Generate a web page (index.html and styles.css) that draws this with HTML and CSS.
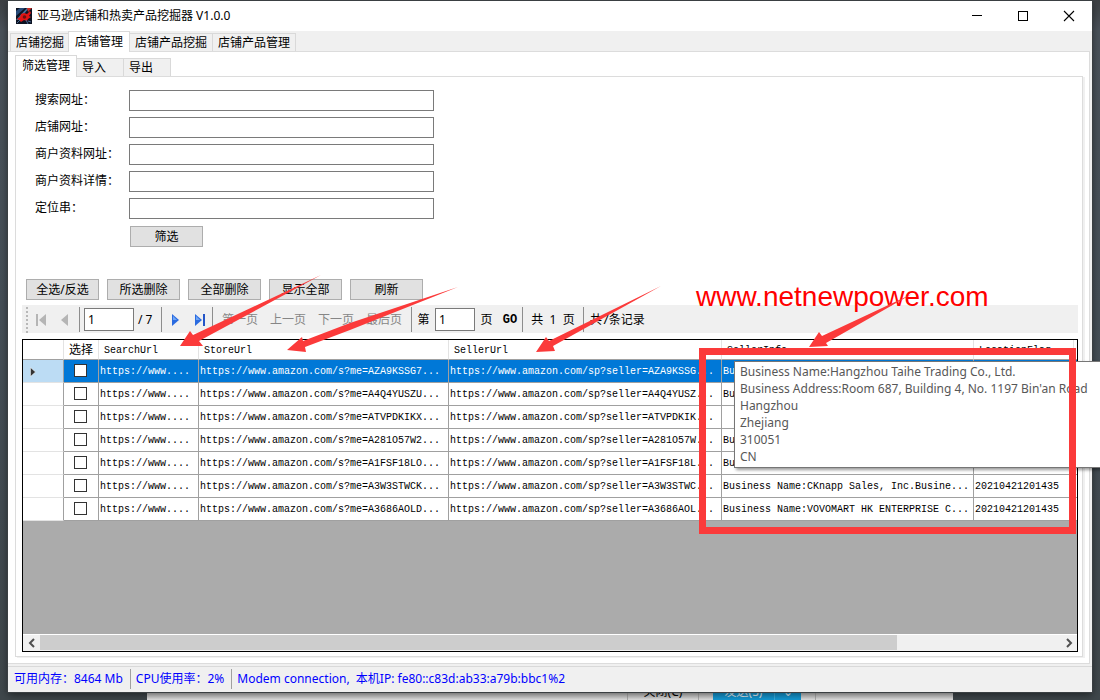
FILE: index.html
```html
<!DOCTYPE html>
<html lang="zh-CN">
<head>
<meta charset="utf-8">
<title>亚马逊店铺和热卖产品挖掘器 V1.0.0</title>
<link rel="stylesheet" href="styles.css">
</head>
<body>
<div class="behind">
  <div class="behind-cell behind-close">关闭(C)</div>
  <div class="behind-send"><span class="behind-label">发送(S)</span><span class="behind-more">⌄</span></div>
  <div class="behind-cell behind-end"></div>
</div>

<main class="window">
  <header class="titlebar">
    <svg class="app-icon" viewBox="0 0 16 16" width="16" height="16">
      <rect width="16" height="16" fill="#0c1322"/>
      <path d="M0 3L4 0H9L0 8Z" fill="#274a78"/>
      <path d="M0 12L11 0L13 0L3 12Z" fill="#45709c"/>
      <path d="M11 0H16L12 4Z" fill="#cf2a22"/>
      <path d="M5 6L8 5L11 6L14 3L15 5L13 8L15 9L12 11L11 13L8 12L5 14L3 12L1 11L4 9Z" fill="#e01414"/>
      <circle cx="8.500" cy="9" r="1.800" fill="#6d1010"/>
      <path d="M1 15L4 12M12 13L15 14M10 12L12 16" stroke="#4a6a94" fill="none"/>
    </svg>
    <h1 class="title">亚马逊店铺和热卖产品挖掘器 V1.0.0</h1>
    <button class="win-btn" aria-label="最小化"><svg width="12" height="12" viewBox="0 0 12 12"><path d="M1 5.500H11" stroke="#000"/></svg></button>
    <button class="win-btn" aria-label="最大化"><svg width="12" height="12" viewBox="0 0 12 12"><rect x="1.500" y="1.500" width="9" height="9" fill="none" stroke="#000"/></svg></button>
    <button class="win-btn" aria-label="关闭"><svg width="12" height="12" viewBox="0 0 12 12"><path d="M1 1L11 11M11 1L1 11" stroke="#000" stroke-width="1.100"/></svg></button>
  </header>

  <nav class="tabs main-tabs">
    <button class="tab">店铺挖掘</button>
    <button class="tab active">店铺管理</button>
    <button class="tab">店铺产品挖掘</button>
    <button class="tab">店铺产品管理</button>
  </nav>
  <section class="panel main-panel">
    <nav class="tabs sub-tabs">
      <button class="tab active">筛选管理</button>
      <button class="tab short">导入</button>
      <button class="tab short">导出</button>
    </nav>
    <section class="panel sub-panel">
      <form class="filter">
        <label for="f1">搜索网址：</label><input id="f1" type="text">
        <label for="f2">店铺网址：</label><input id="f2" type="text">
        <label for="f3">商户资料网址：</label><input id="f3" type="text">
        <label for="f4">商户资料详情：</label><input id="f4" type="text">
        <label for="f5">定位串：</label><input id="f5" type="text">
        <button class="btn filter-btn" type="button">筛选</button>
      </form>
      <div class="actions">
        <button class="btn">全选/反选</button>
        <button class="btn">所选删除</button>
        <button class="btn">全部删除</button>
        <button class="btn">显示全部</button>
        <button class="btn">刷新</button>
      </div>

      <div class="toolbar">
        <span class="grip"></span>
        <button class="nav" aria-label="首页"><svg width="12" height="12" viewBox="0 0 12 12"><path d="M1 0H3V12H1Z" fill="#b5b5b5"/><path d="M11 0V12L4 6Z" fill="#b5b5b5"/></svg></button>
        <button class="nav" aria-label="前页"><svg width="12" height="12" viewBox="0 0 12 12"><path d="M11 0V12L4 6Z" fill="#b5b5b5"/></svg></button>
        <span class="sep"></span>
        <input class="page-box" type="text" value="1" aria-label="当前页">
        <span class="total">/ 7</span>
        <span class="sep"></span>
        <button class="nav wide" aria-label="后页"><svg width="12" height="12" viewBox="0 0 12 12"><path d="M3 0V12L10 6Z" fill="#2a6be0"/><path d="M4 2V6H8Z" fill="#6ea5f5"/></svg></button>
        <button class="nav wide" aria-label="末页"><svg width="12" height="12" viewBox="0 0 12 12"><path d="M1 0V12L8 6Z" fill="#2a6be0"/><path d="M2 2V6H6Z" fill="#6ea5f5"/><path d="M9 0H11V12H9Z" fill="#2455c8"/></svg></button>
        <span class="sep"></span>
        <span class="links">
          <button class="link" disabled>第一页</button>
          <button class="link" disabled>上一页</button>
          <button class="link" disabled>下一页</button>
          <button class="link" disabled>最后页</button>
        </span>
        <span class="sep"></span>
        <label class="tight" for="go">第</label>
        <input class="page-box small" id="go" type="text" value="1">
        <span class="tight">页</span>
        <button class="go">GO</button>
        <span class="sep"></span>
        <span class="pages">共&nbsp; 1&nbsp; 页</span>
        <span class="sep"></span>
        <span class="records">共7条记录</span>
      </div>

      <div class="grid">
        <div class="grid-view">
        <table>
          <colgroup><col class="c-row"><col class="c-check"><col class="c-search"><col class="c-store"><col class="c-seller"><col class="c-info"><col class="c-flag"><col class="c-rest"></colgroup>
          <thead>
            <tr><th></th><th class="pick">选择</th><th>SearchUrl</th><th>StoreUrl</th><th>SellerUrl</th><th>SellerInfo</th><th>LocationFlag</th><th></th></tr>
          </thead>
          <tbody>
            <tr class="selected"><td><svg class="marker" width="6" height="10" viewBox="0 0 6 10"><path d="M0.500 0.500V9.500L5.500 5Z" fill="#333" stroke="#fff" stroke-width=".5"/></svg></td><td><input type="checkbox" aria-label="选择"></td><td>https://www....</td><td>https://www.amazon.com/s?me=AZA9KSSG7...</td><td>https://www.amazon.com/sp?seller=AZA9KSSG...</td><td>Bu</td><td></td><td></td></tr>
            <tr><td></td><td><input type="checkbox" aria-label="选择"></td><td>https://www....</td><td>https://www.amazon.com/s?me=A4Q4YUSZU...</td><td>https://www.amazon.com/sp?seller=A4Q4YUSZ...</td><td>Bu</td><td></td><td></td></tr>
            <tr><td></td><td><input type="checkbox" aria-label="选择"></td><td>https://www....</td><td>https://www.amazon.com/s?me=ATVPDKIKX...</td><td>https://www.amazon.com/sp?seller=ATVPDKIK...</td><td></td><td></td><td></td></tr>
            <tr><td></td><td><input type="checkbox" aria-label="选择"></td><td>https://www....</td><td>https://www.amazon.com/s?me=A281O57W2...</td><td>https://www.amazon.com/sp?seller=A281O57W...</td><td>Bu</td><td></td><td></td></tr>
            <tr><td></td><td><input type="checkbox" aria-label="选择"></td><td>https://www....</td><td>https://www.amazon.com/s?me=A1FSF18LO...</td><td>https://www.amazon.com/sp?seller=A1FSF18L...</td><td>Bu</td><td></td><td></td></tr>
            <tr><td></td><td><input type="checkbox" aria-label="选择"></td><td>https://www....</td><td>https://www.amazon.com/s?me=A3W3STWCK...</td><td>https://www.amazon.com/sp?seller=A3W3STWC...</td><td>Business Name:CKnapp Sales, Inc.Busine...</td><td>20210421201435</td><td></td></tr>
            <tr><td></td><td><input type="checkbox" aria-label="选择"></td><td>https://www....</td><td>https://www.amazon.com/s?me=A3686AOLD...</td><td>https://www.amazon.com/sp?seller=A3686AOL...</td><td>Business Name:VOVOMART HK ENTERPRISE C...</td><td>20210421201435</td><td></td></tr>
          </tbody>
        </table>
        </div>
        <div class="scrollbar">
          <button class="scroll-btn" aria-label="向左"><svg width="8" height="10" viewBox="0 0 8 10"><path d="M6 1L2 5L6 9" fill="none" stroke="#505050" stroke-width="2"/></svg></button>
          <div class="track"><div class="thumb"></div></div>
          <button class="scroll-btn" aria-label="向右"><svg width="8" height="10" viewBox="0 0 8 10"><path d="M2 1L6 5L2 9" fill="none" stroke="#505050" stroke-width="2"/></svg></button>
        </div>
      </div>
    </section>
  </section>

  <footer class="status">
    <span>可用内存：8464 Mb</span>
    <span>CPU使用率：2%</span>
    <span>Modem connection,&nbsp; 本机IP: fe80::c83d:ab33:a79b:bbc1%2</span>
  </footer>
</main>

<div class="tooltip" role="tooltip">Business Name:Hangzhou Taihe Trading Co., Ltd.<br>Business Address:Room 687, Building 4, No. 1197 Bin'an Road<br>Hangzhou<br>Zhejiang<br>310051<br>CN</div>
<div class="frame"></div>
<div class="watermark">www.netnewpower.com</div>
<svg class="arrows" width="1100" height="400" viewBox="0 0 1100 400">
  <g fill="#fb3a3a">
    <path d="M180 346L190 331L193 335L321 275L199 341L203 346Z"/>
    <path d="M287 350L302 337L303 341L350 323L458 287L350 330L305 347L306 352Z"/>
    <path d="M536 352L546 337L549 341L661 286L553 346L555 351Z"/>
    <path d="M809 347L819 332L822 336L912 294L826 343L828 346Z"/>
  </g>
</svg>
</body>
</html>
```
FILE: styles.css
```css
* { box-sizing: border-box; }
body {
  margin: 0;
  height: 100vh;
  overflow: hidden;
  position: relative;
  background: linear-gradient(#3c4043 0, #4a525a 30px, #454f57 45%, #3f474b);
  font: 12px/16px "Noto Sans", "Noto Sans CJK SC", sans-serif;
  color: #000;
}
button, input { font: inherit; color: inherit; margin: 0; padding: 0; }
button { border: 0; background: none; }
svg { display: block; }

.behind {
  position: absolute;
  left: 147px;
  right: 147px;
  bottom: 0;
  height: 16px;
  display: flex;
  overflow: hidden;
  background: linear-gradient(#b8b8b8 7px, #e6e6e6 16px);
  padding-left: 480px;
}
.behind-cell { border: 1px solid #b0b0b0; border-width: 0 1px; }
.behind-close { width: 72px; text-align: center; }
.behind-send {
  display: flex;
  width: 88px;
  margin: 0 14px;
  background: #149bd7;
  color: #e6f4fb;
}
.behind-label { width: 62px; text-align: center; border-right: 1px solid #3bb0e2; }
.behind-more { flex: 1; text-align: center; }
.behind-end { border-right: 0; flex: 1; }

.window {
  position: relative;
  height: calc(100vh - 9px);
  margin: 1px 8px 8px;
  display: flex;
  flex-direction: column;
  background: #f0f0f0;
  box-shadow: 0 0 0 1px #3a3f42, 0 3px 8px rgba(0, 0, 0, .5);
}
.titlebar { display: flex; align-items: center; height: 30px; padding-left: 8px; background: #fff; }
.title { flex: 1; margin: 0 0 0 5px; font-size: 12px; font-weight: 400; }
.win-btn { width: 46px; height: 30px; display: flex; align-items: center; justify-content: center; }

.tabs { display: flex; align-items: flex-end; position: relative; }
.main-tabs { height: 20px; padding-left: 2px; }
.sub-tabs { height: 21px; margin-left: 7px; }
.tab {
  height: 18px;
  padding: 0 5px;
  border: 1px solid #d9d9d9;
  border-left-width: 0;
  border-bottom: 0;
  background: #f0f0f0;
  text-align: left;
}
.tab:first-child { border-left-width: 1px; padding-right: 4px; }
.tab.active {
  height: 21px;
  padding: 0 6px 1px;
  margin: 0 0 -1px -1px;
  border-left-width: 1px;
  background: #fff;
}
.tab.short { width: 47px; }
.sub-tabs .tab.active { margin-left: 0; height: 22px; }

.panel { display: flex; flex-direction: column; flex: 1; min-height: 0; background: #fff; border: 1px solid #dcdcdc; }
.main-panel { margin: 0 2px 1px 0; padding: 3px 6px 6px 0; border-left: 0; }
.sub-panel { margin-left: 7px; padding: 12px 4px 4px 6px; box-shadow: 2px 1px 0 #f0f0f0; }

.filter {
  display: grid;
  grid-template-columns: 94px 305px;
  grid-auto-rows: 21px;
  row-gap: 6px;
  padding: 1px 0 0 13px;
  line-height: 20px;
}
.filter input { border: 1px solid #7a7a7a; background: #fff; padding: 0 3px; }
.filter-btn { grid-column: 2; margin: 1px 0 -1px 1px; }
.btn { width: 73px; height: 21px; border: 1px solid #adadad; background: #e1e1e1; text-align: center; line-height: 18px; }
.actions { display: flex; gap: 8px; margin: 33px 0 5px 4px; }

.toolbar { display: flex; align-items: center; height: 28px; background: #f0f0f0; white-space: nowrap; flex: none; line-height: 18px; padding-top: 1px; }
.grip { width: 2px; height: 26px; margin: 0 7px 0 4px; background: repeating-linear-gradient(#b8b8b8 0 2px, transparent 2px 4px); }
.nav { width: 22px; display: flex; justify-content: flex-start; }
.nav.wide { width: 25px; justify-content: center; }
.sep { width: 1px; height: 25px; background: #8d8d8d; flex: none; }
.page-box { width: 50px; height: 23px; margin-left: 4px; padding: 0 3px; border: 1px solid #7a7a7a; background: #fff; }
.page-box.small { width: 40px; margin-left: 0; }
.total { width: 27px; padding-left: 4px; }
.links { display: flex; padding: 0 3px; }
.link { width: 48px; color: #868686; text-align: center; }
.tight { width: 23px; text-align: center; }
.go { width: 24px; text-align: center; font: bold 12px/16px "Liberation Mono", monospace; }
.pages { width: 60px; text-align: center; }
.records { padding-left: 6px; }

.grid {
  flex: 1;
  min-height: 0;
  display: flex;
  flex-direction: column;
  margin-top: 6px;
  border: 1px solid #000;
  background: #ababab;
}
.grid-view { flex: 1; overflow: hidden; }
table {
  table-layout: fixed;
  width: 1100px;
  border-collapse: separate;
  border-spacing: 0;
  font: 10px/16px "Liberation Mono", "Noto Sans CJK SC", monospace;
}
.c-row { width: 41px; }
.c-check { width: 35px; }
.c-search { width: 100px; }
.c-store { width: 250px; }
.c-seller { width: 273px; }
.c-info { width: 252px; }
.c-flag { width: 100px; }
th, td { padding: 0; overflow: hidden; white-space: nowrap; text-align: left; font-weight: 400; background: #fff; }
th { height: 20px; padding: 2px 0 0 5px; border-right: 1px solid #e3e3e3; border-bottom: 1px solid #a0a0a0; }
th.pick { font-size: 12px; }
td { height: 23px; padding: 2px 0 0 1px; border-right: 1px solid #a0a0a0; border-bottom: 1px solid #a0a0a0; }
td:first-child { border-bottom-color: #e3e3e3; }
.selected td { background: #0078d7; color: #fff; }
.selected td:first-child { background: #bcdcf4; }
.marker { margin-left: 6px; }
td input {
  appearance: none;
  display: block;
  width: 13px;
  height: 13px;
  margin: 0 0 3px 9px;
  border: 1px solid #333;
  background: #fff;
}

.scrollbar { display: flex; height: 17px; background: #f0f0f0; border-top: 1px solid #fff; flex: none; }
.scroll-btn { width: 17px; display: flex; align-items: center; justify-content: center; }
.track { flex: 1; }
.thumb { width: 84%; height: 15px; background: #cdcdcd; }

.status {
  display: flex;
  align-items: center;
  height: 26px;
  margin-top: 1px;
  padding: 0 0 1px 1px;
  border-top: 1px solid #d9d9d9;
  color: #00f;
  white-space: nowrap;
  flex: none;
}
.status span { padding: 2px 7px 2px 5px; border-right: 1px solid #a0a0a0; }
.status span:last-child { border: 0; }

.tooltip {
  position: absolute;
  left: 734px;
  top: 361px;
  width: 380px;
  height: 107px;
  padding: 1px 5px;
  border: 1px solid #767676;
  background: #fff;
  color: #575757;
  line-height: 17px;
  white-space: nowrap;
  box-shadow: 2px 2px 3px rgba(0, 0, 0, .4);
}
.frame { position: absolute; left: 699px; top: 348px; width: 377px; height: 186px; border: 7px solid #fb3a3a; }
.watermark { position: absolute; left: 696px; top: 281px; color: #f00; font: 28px/32px "Liberation Sans", sans-serif; }
.arrows { position: absolute; left: 0; top: 0; pointer-events: none; }
```
